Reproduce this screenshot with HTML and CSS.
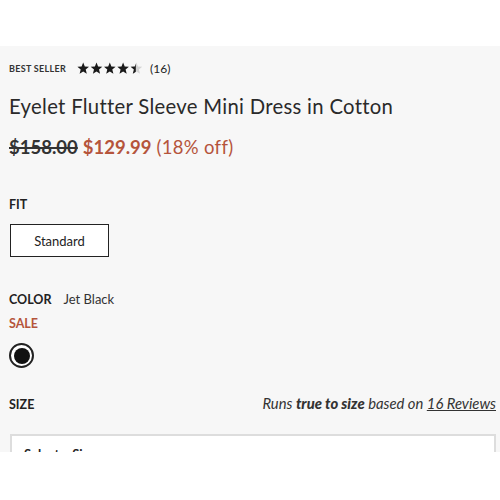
FILE: index.html
```html
<!DOCTYPE html>
<html>
<head>
<meta charset="utf-8">
<link rel="stylesheet" href="styles.css">
</head>
<body>
<div class="topbar"></div>
<main class="product">
  <div class="badge-row">
    <span class="badge">BEST SELLER</span>
    <span class="stars">
      <svg width="66" height="13" viewBox="0 0 66 13">
        <defs>
          <path id="st" d="M6.2 0.6 L7.8 4.6 L12 4.8 L8.7 7.5 L9.8 11.8 L6.2 9.4 L2.6 11.8 L3.7 7.5 L0.4 4.8 L4.6 4.6 Z"/>
          <clipPath id="half"><rect x="0" y="0" width="5.6" height="13"/></clipPath>
        </defs>
        <use href="#st" x="0" fill="#1a1a1a"/>
        <use href="#st" x="13.3" fill="#1a1a1a"/>
        <use href="#st" x="26.6" fill="#1a1a1a"/>
        <use href="#st" x="39.9" fill="#1a1a1a"/>
        <use href="#st" x="53.2" fill="#d4d4d4"/>
        <g clip-path="url(#half)" transform="translate(53.2 0)"><use href="#st" fill="#1a1a1a"/></g>
      </svg>
    </span>
    <span class="count">(16)</span>
  </div>
  <h1 class="title">Eyelet Flutter Sleeve Mini Dress in Cotton</h1>
  <div class="price">
    <span class="was">$158.00</span>
    <span class="now">$129.99</span>
    <span class="off">(18% off)</span>
  </div>

  <section class="fit">
    <div class="label">FIT</div>
    <button class="fit-btn">Standard</button>
  </section>

  <section class="color">
    <div class="color-row"><span class="label">COLOR</span><span class="color-name">Jet Black</span></div>
    <div class="sale">SALE</div>
    <div class="swatch"><span class="swatch-dot"></span></div>
  </section>

  <section class="size">
    <div class="size-row">
      <span class="label">SIZE</span>
      <span class="fit-note">Runs <b>true to size</b> based on <u>16 Reviews</u></span>
    </div>
    <div class="select">Select a Size</div>
  </section>
</main>
</body>
</html>
```
FILE: styles.css
```css
html, body {
  margin: 0;
  padding: 0;
  background: #ffffff;
}
body {
  font-family: Lato, "Open Sans", Arial, sans-serif;
  color: #222;
}
.topbar {
  height: 46px;
  background: #ffffff;
}
.product {
  background: #f7f7f7;
  height: 406px;
  overflow: hidden;
  padding: 15px 4px 0 9px;
  box-sizing: border-box;
}
.badge-row {
  display: flex;
  align-items: center;
  height: 14px;
}
.badge {
  font-size: 9px;
  font-weight: 700;
  letter-spacing: 0.3px;
  color: #333;
}
.stars {
  margin-left: 11px;
  display: flex;
  align-items: center;
}
.stars svg { display: block; }
.count {
  margin-left: 7px;
  font-size: 12px;
  color: #222;
}
.title {
  margin: 19px 0 0 0;
  font-size: 20.3px;
  font-weight: 400;
  line-height: 24px;
  color: #2a2a2a;
  letter-spacing: 0.3px;
}
.price {
  margin-top: 17px;
  font-size: 18.5px;
  line-height: 24px;
  display: flex;
  gap: 5px;
}
.was {
  font-weight: 700;
  color: #333;
  text-decoration: line-through;
  text-decoration-thickness: 2px;
}
.now {
  font-weight: 700;
  color: #b5543b;
}
.off {
  color: #b5543b;
  letter-spacing: 0.3px;
}
.label {
  font-size: 12.5px;
  font-weight: 700;
  color: #222;
  line-height: 14px;
}
.fit {
  margin-top: 39px;
}
.fit-btn {
  margin: 12px 0 0 1px;
  width: 99px;
  height: 33px;
  border: 1.5px solid #222;
  background: #fff;
  font-family: inherit;
  font-size: 13px;
  color: #222;
  padding: 0;
}
.color {
  margin-top: 34px;
}
.color-row {
  display: flex;
  align-items: baseline;
  gap: 12px;
}
.color-name {
  font-size: 13px;
  color: #333;
}
.sale {
  margin-top: 10px;
  font-size: 12.5px;
  font-weight: 700;
  color: #b5543b;
  line-height: 14px;
}
.swatch {
  margin-top: 12px;
  width: 21px;
  height: 21px;
  border: 2px solid #222;
  border-radius: 50%;
  display: flex;
  align-items: center;
  justify-content: center;
  background: #fff;
}
.swatch-dot {
  width: 16px;
  height: 16px;
  border-radius: 50%;
  background: #111;
}
.size {
  margin-top: 26px;
}
.size-row {
  display: flex;
  justify-content: space-between;
  align-items: baseline;
  padding-left: 0;
}
.fit-note {
  font-size: 14.8px;
  font-style: italic;
  color: #333;
}
.fit-note b { font-weight: 900; }
.select {
  margin-top: 22px;
  margin-left: 1px;
  height: 40px;
  background: #fff;
  border: 2px solid #ddd;
  padding: 10px 12px;
  font-size: 13px;
  line-height: 16px;
  font-weight: 700;
  box-sizing: border-box;
}
```
